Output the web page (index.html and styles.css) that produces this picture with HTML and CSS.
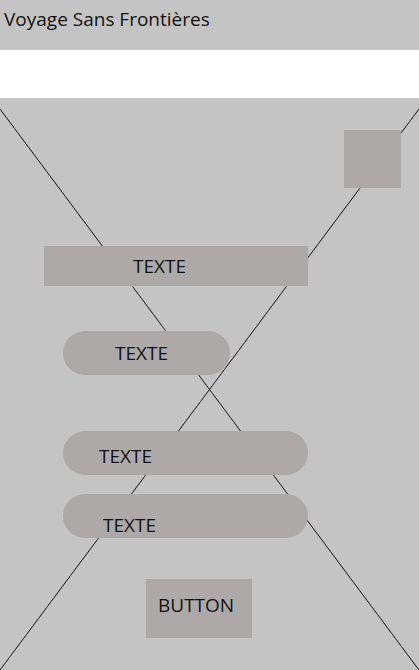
FILE: index.html
```html
<!DOCTYPE html>
<html>
	<head>
		<meta charset="UTF-8">
		<title>Voyage Sans Frontières</title>
		<link rel="stylesheet" href="styles.css">
	</head>

	<body>
		<header class="topbar">
			<h1 class="title">Voyage Sans Frontières</h1>
		</header>
		<div class="gap_band"></div>
		<main class="board">
			<svg class="cross" viewBox="0 0 419 572" preserveAspectRatio="none">
				<line x1="0" y1="11" x2="419" y2="572" />
				<line x1="419" y1="11" x2="0" y2="572" />
			</svg>
			<div class="thumb"></div>
			<div class="block bar">TEXTE</div>
			<div class="block pill pill_short">TEXTE</div>
			<div class="block pill pill_long">TEXTE</div>
			<div class="block pill pill_long pill_low">TEXTE</div>
			<button class="block btn">BUTTON</button>
		</main>
	</body>
</html>
```

FILE: styles.css
```css
* {
	margin: 0;
	padding: 0;
	box-sizing: border-box;
}

body {
	width: 419px;
	height: 670px;
	overflow: hidden;
	font-family: "Open Sans", "Noto Sans", sans-serif;
	color: #111;
	background-color: #fff;
}

.topbar {
	height: 50px;
	background-color: #c4c4c4;
	padding: 6px 0 0 4px;
}

.title {
	font-size: 19px;
	font-weight: normal;
	line-height: 26px;
}

.gap_band {
	height: 48px;
	background-color: #fff;
}

.board {
	position: relative;
	height: 572px;
	background-color: #c4c4c4;
	display: flex;
	flex-direction: column;
	align-items: flex-start;
}

.cross {
	position: absolute;
	left: 0;
	top: 0;
	width: 419px;
	height: 572px;
}

.cross line {
	stroke: #111;
	stroke-width: 1;
}

.thumb,
.block {
	position: relative;
	background-color: #aea9a9;
}

.thumb {
	align-self: flex-end;
	width: 57px;
	height: 58px;
	margin: 32px 18px 0 0;
}

.block {
	display: flex;
	align-items: center;
	font-size: 19px;
	line-height: 24px;
}

.bar {
	width: 264px;
	height: 40px;
	margin: 58px 0 0 44px;
	padding-left: 89px;
}

.pill {
	height: 44px;
	border-radius: 22px;
	margin-left: 63px;
}

.pill_short {
	width: 167px;
	margin-top: 45px;
	padding-left: 52px;
}

.pill_long {
	width: 245px;
	margin-top: 56px;
	padding-left: 36px;
	padding-top: 6px;
}

.pill_low {
	margin-top: 19px;
	padding-left: 40px;
	padding-top: 18px;
}

.btn {
	width: 106px;
	height: 59px;
	margin: 41px 0 0 146px;
	padding: 0 0 7px 12px;
	border: 0;
	font-family: inherit;
	color: #111;
	outline: none;
}
```
